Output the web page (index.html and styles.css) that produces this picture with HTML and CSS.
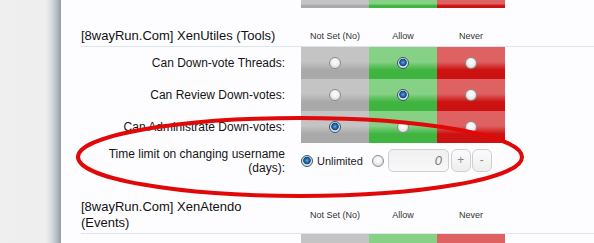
FILE: index.html
```html
<!DOCTYPE html>
<html>
<head>
<meta charset="utf-8">
<link rel="stylesheet" href="styles.css">
</head>
<body>
<div class="page">
  <div class="side"></div>
  <div class="panel">
    <div class="row tail">
      <div></div><span class="c n"></span><span class="c a"></span><span class="c v"></span>
    </div>

    <div class="row head">
      <h3 class="title">[8wayRun.Com] XenUtiles (Tools)</h3>
      <span class="col">Not Set (No)</span><span class="col">Allow</span><span class="col">Never</span>
    </div>

    <div class="row perm">
      <label class="lbl">Can Down-vote Threads:</label>
      <span class="c n"><i class="radio"></i></span><span class="c a"><i class="radio on"></i></span><span class="c v"><i class="radio"></i></span>
    </div>
    <div class="row perm">
      <label class="lbl">Can Review Down-votes:</label>
      <span class="c n"><i class="radio"></i></span><span class="c a"><i class="radio on"></i></span><span class="c v"><i class="radio"></i></span>
    </div>
    <div class="row perm">
      <label class="lbl">Can Administrate Down-votes:</label>
      <span class="c n"><i class="radio on"></i></span><span class="c a"><i class="radio"></i></span><span class="c v"><i class="radio"></i></span>
    </div>

    <div class="row time">
      <label class="lbl">Time limit on changing username (days):</label>
      <div class="controls">
        <i class="radio on"></i>
        <span class="unl">Unlimited</span>
        <i class="radio r2"></i>
        <span class="num">0</span>
        <span class="btn plus">+</span>
        <span class="btn minus">-</span>
      </div>
    </div>

    <div class="row head">
      <h3 class="title">[8wayRun.Com] XenAtendo<br>(Events)</h3>
      <span class="col">Not Set (No)</span><span class="col">Allow</span><span class="col">Never</span>
    </div>

    <div class="row perm">
      <label class="lbl"></label>
      <span class="c n"></span><span class="c a"></span><span class="c v"></span>
    </div>
  </div>

  <svg class="mark" width="594" height="243" viewBox="0 0 594 243">
    <ellipse cx="300" cy="157" rx="222" ry="39" fill="none" stroke="#e00808" stroke-width="4"/>
  </svg>
</div>
</body>
</html>
```

FILE: styles.css
```css
html, body {
  margin: 0;
  padding: 0;
  height: 243px;
  overflow: hidden;
  background: #fdfdff;
}

.page {
  position: relative;
  display: grid;
  grid-template-columns: 61px 1fr;
  height: 243px;
  font-family: "Liberation Sans", Arial, sans-serif;
  color: #151515;
}

.side {
  background: linear-gradient(to right, #efefef 0, #eeeeee 46px, #d5d9dd 52px, #b4bbc2 57px, #98a1aa 60px, #98a1aa 61px);
}

.panel {
  background: #fdfdff;
  padding-left: 20px;
  overflow: hidden;
}

.row {
  display: grid;
  grid-template-columns: 220px 68px 68px 68px 1fr;
}

.tail {
  height: 8px;
}
.tail .n { background: #aaaaaa; }
.tail .a { background: #41b441; }
.tail .v { background: #cc1111; }

.head {
  padding: 20px 0 2px;
  border-bottom: 1px solid #dde6ee;
  align-items: center;
}

.title {
  margin: 0;
  font-size: 13px;
  line-height: 16px;
  font-weight: normal;
  color: #111;
}

.col {
  font-size: 9px;
  text-align: center;
  color: #333;
}

.perm {
  height: 32px;
}

.lbl {
  font-size: 12px;
  line-height: 14px;
  text-align: right;
  padding-right: 16px;
  align-self: center;
}

.c {
  display: flex;
  align-items: center;
  justify-content: center;
}
.c.n { background: linear-gradient(to bottom, #c4c4c4 0, #c4c4c4 46%, #a9a9a9 72%, #a9a9a9 100%); }
.c.a { background: linear-gradient(to bottom, #87d187 0, #87d187 46%, #3fb43f 72%, #3fb43f 100%); }
.c.v { background: linear-gradient(to bottom, #df6262 0, #df6262 46%, #cc1111 72%, #cc1111 100%); }

.radio {
  display: block;
  box-sizing: border-box;
  width: 12px;
  height: 12px;
  border-radius: 50%;
  border: 1px solid #8c8c8c;
  background: radial-gradient(circle at 50% 40%, #ffffff 0, #f3f3f3 35%, #cfcfcf 100%);
}
.radio.on {
  border-color: #3b5773;
  background: radial-gradient(circle at 50% 45%, #6fb3e6 0, #2d74b4 1.6px, #134a80 3.4px, #dde5ec 4.2px, #c9d0d6 100%);
}

.time {
  padding: 4px 0 4px;
}
.time .lbl {
  align-self: start;
}

.controls {
  grid-column: 2 / -1;
  display: flex;
  align-items: center;
  margin-top: 2px;
  height: 23px;
}

.unl {
  font-size: 11px;
  margin-left: 4px;
  color: #222;
}

.r2 {
  margin-left: 9px;
}

.num {
  box-sizing: border-box;
  width: 61px;
  height: 23px;
  margin-left: 4px;
  border: 1px solid #cfcfcf;
  border-radius: 5px;
  background: linear-gradient(to bottom, #f0f0f0, #f8f8f8);
  font-size: 13px;
  font-style: italic;
  color: #7a7a7a;
  text-align: right;
  padding-right: 6px;
  line-height: 21px;
}

.btn {
  box-sizing: border-box;
  width: 20px;
  height: 23px;
  border: 1px solid #cfcfcf;
  border-radius: 6px;
  background: linear-gradient(to bottom, #fbfbfb, #eeeeee);
  color: #8a8a8a;
  font-size: 12px;
  line-height: 21px;
  text-align: center;
}
.plus { margin-left: 2px; }
.minus { margin-left: 1px; }

.mark {
  position: absolute;
  left: 0;
  top: 0;
  pointer-events: none;
}
```
